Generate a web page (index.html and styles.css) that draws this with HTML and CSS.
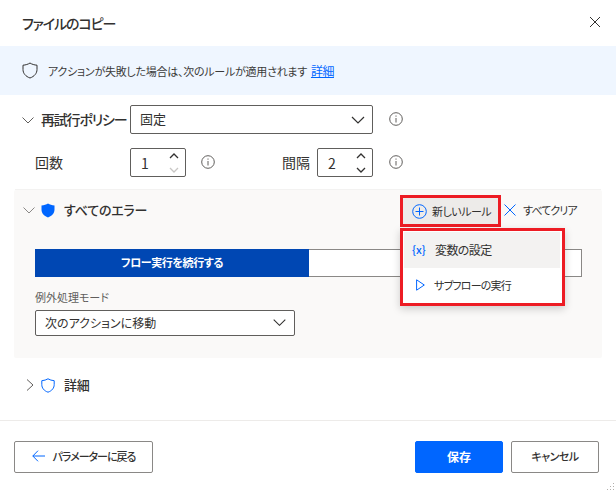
FILE: index.html
```html
<!DOCTYPE html>
<html lang="ja">
<head>
  <meta charset="UTF-8" />
  <title>ファイルのコピー</title>
  <link rel="stylesheet" href="styles.css">
</head>
<body>
  <div class="dialog">
    <header class="title-bar">
      <h1>ファイルのコピー</h1>
      <svg class="close" width="12" height="12" viewBox="0 0 12 12"><path d="M1 1l10 10M11 1L1 11" stroke="#323130" fill="none"/></svg>
    </header>

    <div class="banner">
      <svg width="16" height="17" viewBox="0 0 16 17"><path d="M8 1c2 1.300 4.300 2 7 2.200v4.300c0 3.800-2.600 6.900-7 8.500-4.400-1.600-7-4.700-7-8.500V3.200C3.700 3 6 2.300 8 1z" fill="none" stroke="#323130"/></svg>
      <span>アクションが失敗した場合は、次のルールが適用されます</span>
      <a href="#">詳細</a>
    </div>

    <section class="policy">
      <div class="policy-row">
        <svg class="chev" width="12" height="8" viewBox="0 0 12 8"><path d="M.5 1.500L6 7l5.500-5.500" fill="none" stroke="#605e5c"/></svg>
        <span class="policy-label">再試行ポリシー</span>
        <div class="select select-wide">
          <span>固定</span>
          <svg width="14" height="8" viewBox="0 0 14 8"><path d="M1 1l6 6 6-6" fill="none" stroke="#323130" stroke-width="1.200"/></svg>
        </div>
        <svg class="info" width="14" height="14" viewBox="0 0 14 14"><circle cx="7" cy="7" r="6.300" fill="none" stroke="#605e5c"/><path d="M7 6v4.500M7 3.500v1.200" stroke="#605e5c"/></svg>
      </div>
      <div class="policy-row count-row">
        <span class="count-label">回数</span>
        <div class="spin">
          <span>1</span>
          <svg width="10" height="22" viewBox="0 0 10 22"><path d="M1 6l4-4 4 4" fill="none" stroke="#323130" stroke-width="1.300"/><path d="M1 16l4 4 4-4" fill="none" stroke="#c8c6c4" stroke-width="1.300"/></svg>
        </div>
        <svg class="info info-count" width="14" height="14" viewBox="0 0 14 14"><circle cx="7" cy="7" r="6.300" fill="none" stroke="#605e5c"/><path d="M7 6v4.500M7 3.500v1.200" stroke="#605e5c"/></svg>
        <span class="interval-label">間隔</span>
        <div class="spin">
          <span>2</span>
          <svg width="10" height="22" viewBox="0 0 10 22"><path d="M1 6l4-4 4 4" fill="none" stroke="#323130" stroke-width="1.300"/><path d="M1 16l4 4 4-4" fill="none" stroke="#323130" stroke-width="1.300"/></svg>
        </div>
        <svg class="info" width="14" height="14" viewBox="0 0 14 14"><circle cx="7" cy="7" r="6.300" fill="none" stroke="#605e5c"/><path d="M7 6v4.500M7 3.500v1.200" stroke="#605e5c"/></svg>
      </div>
    </section>

    <section class="errors">
      <div class="errors-head">
        <svg class="chev" width="12" height="8" viewBox="0 0 12 8"><path d="M.5 1.500L6 7l5.500-5.500" fill="none" stroke="#8a8886"/></svg>
        <svg class="shield" width="14" height="15" viewBox="0 0 14 15"><path d="M7 .5c1.800 1.200 3.900 1.800 6.500 2v4c0 3.600-2.300 6.500-6.500 8-4.200-1.500-6.500-4.400-6.500-8v-4C3.100 2.300 5.200 1.700 7 .5z" fill="#0066ff"/></svg>
        <strong class="errors-title">すべてのエラー</strong>
        <div class="new-rule">
          <svg width="15" height="15" viewBox="0 0 15 15"><circle cx="7.500" cy="7.500" r="6.800" fill="none" stroke="#0066ff"/><path d="M7.500 3.500v8M3.500 7.500h8" stroke="#0066ff"/></svg>
          <span>新しいルール</span>
        </div>
        <div class="clear-all">
          <svg width="12" height="12" viewBox="0 0 12 12"><path d="M.5.500l11 11M11.500.500l-11 11" stroke="#0066ff" fill="none"/></svg>
          <span>すべてクリア</span>
        </div>
      </div>

      <div class="toggle">
        <div class="toggle-on">フロー実行を続行する</div>
        <div class="toggle-off"></div>
      </div>

      <div class="field-label">例外処理モード</div>
      <div class="select select-mode">
        <span>次のアクションに移動</span>
        <svg width="13" height="7" viewBox="0 0 13 7"><path d="M.7.700l5.800 5.600L12.300.700" fill="none" stroke="#323130" stroke-width="1.100"/></svg>
      </div>

      <div class="menu">
        <div class="menu-item menu-item-active">
          <span class="var-icon">{x}</span>
          <span>変数の設定</span>
        </div>
        <div class="menu-item menu-item-flow">
          <svg class="play" width="9" height="12" viewBox="0 0 9 12"><path d="M.6.800L8.300 6 .6 11.200z" fill="none" stroke="#0066ff"/></svg>
          <span>サブフローの実行</span>
        </div>
      </div>
    </section>

    <div class="details-row">
      <svg class="chev-right" width="8" height="12" viewBox="0 0 8 12"><path d="M1 .5L7 6l-6 5.500" fill="none" stroke="#605e5c"/></svg>
      <svg class="shield" width="14" height="15" viewBox="0 0 14 15"><path d="M7 .8c1.800 1.100 3.800 1.700 6.200 1.900v3.900c0 3.400-2.200 6.200-6.200 7.600C3 12.800.8 10 .8 6.600V2.700C3.200 2.500 5.200 1.900 7 .8z" fill="none" stroke="#0066ff"/></svg>
      <strong class="errors-title">詳細</strong>
    </div>

    <footer class="footer">
      <button class="btn btn-back">
        <svg width="13" height="12" viewBox="0 0 13 12"><path d="M6 .7L.8 6 6 11.300M.8 6H13" fill="none" stroke="#0066ff"/></svg>
        <span>パラメーターに戻る</span>
      </button>
      <button class="btn btn-save">保存</button>
      <button class="btn btn-cancel">キャンセル</button>
    </footer>

    <svg class="grip" width="10" height="8" viewBox="0 0 10 8"><path d="M8 0h1v1H8zM5 3h1v1H5zM8 3h1v1H8zM2 6h1v1H2zM5 6h1v1H5zM8 6h1v1H8z" fill="#b3b0ad"/></svg>
  </div>
</body>
</html>
```

FILE: styles.css
```css
* { box-sizing: border-box; }
html, body { height: 100%; }
body {
  margin: 0;
  background: #fff;
  color: #323130;
  font-family: "Noto Sans CJK JP", "Noto Sans", sans-serif;
  font-feature-settings: "palt";
  font-size: 12px;
  white-space: nowrap;
  overflow: hidden;
}
svg { display: block; flex: none; }
.dialog { position: relative; height: 100%; }

.title-bar {
  height: 46px;
  padding: 0 15px 0 22px;
  display: flex;
  justify-content: space-between;
  align-items: center;
}
.title-bar h1 { margin: 0 0 1px; font-size: 14px; font-weight: 500; line-height: 20px; letter-spacing: -1.1px; }
.close { margin-bottom: 2px; }

.banner {
  height: 49px;
  padding-left: 22px;
  display: flex;
  align-items: center;
  background: #eff6ff;
  font-size: 11px;
}
.banner span { margin-left: 10px; color: #3b3a39; line-height: 16px; letter-spacing: -.25px; }
.banner a { margin-left: 4px; color: #0066ff; font-size: 12px; letter-spacing: -.5px; }

.policy { margin: 0 15px; padding: 10px 0 12px; border-bottom: 1px solid #f3f2f1; height: 95px; }
.policy-row { display: flex; align-items: center; height: 29px; padding-left: 7px; }
.count-row { margin-top: 14px; padding-left: 20px; }
.policy-label { margin: 0 0 2px 7px; width: 89px; font-size: 14px; font-weight: 500; letter-spacing: -1.2px; }
.count-label { width: 95px; font-size: 14px; margin-bottom: 2px; }
.interval-label { margin: 0 0 2px 67px; width: 35px; font-size: 14px; }

.select {
  display: flex;
  justify-content: space-between;
  align-items: center;
  background: #fff;
  border: 1px solid #605e5c;
  border-radius: 2px;
}
.select-wide { width: 243px; height: 29px; padding: 0 7px 2px 9px; font-size: 13px; }
.select-wide svg { margin-top: 2px; }
.info { margin: 0 0 2px 16px; }
.info-count { margin-left: 15px; }

.spin {
  width: 56px;
  height: 29px;
  padding: 0 6px 0 10px;
  display: flex;
  justify-content: space-between;
  align-items: center;
  border: 1px solid #605e5c;
  border-radius: 2px;
  font-size: 14px;
}

.errors {
  position: relative;
  margin: 0 14px;
  height: 168px;
  padding: 0 20px 0 21px;
  background: #faf9f8;
  border-radius: 2px;
}
.errors-head { height: 59px; display: flex; align-items: center; padding-bottom: 19px; margin-left: -12px; }
.errors-head .shield { margin-left: 6px; }
.errors-title { margin: 0 0 2px 9px; font-size: 13px; font-weight: 500; letter-spacing: -.2px; }

.new-rule {
  margin-left: auto;
  width: 101px;
  height: 32px;
  margin-top: 2px;
  padding-left: 9px;
  display: flex;
  align-items: center;
  gap: 5px;
  background: #edebe9;
  border: 3px solid #ed1c24;
  font-size: 11px;
  letter-spacing: -.5px;
}
.clear-all {
  width: 78px;
  margin-left: 3px;
  display: flex;
  align-items: center;
  gap: 7px;
  font-size: 11px;
  letter-spacing: -.9px;
}

.toggle { display: flex; height: 28px; }
.toggle-on {
  width: 274px;
  line-height: 27px;
  text-align: center;
  background: #0047b3;
  color: #fff;
  font-weight: 700;
  font-size: 11px;
  letter-spacing: -.4px;
}
.toggle-off { flex: 1; background: #fff; border: 1px solid #8a8886; border-left: 0; }

.field-label { margin-top: 11px; line-height: 18px; color: #605e5c; font-size: 11px; }
.select-mode { width: 260px; height: 26px; margin-top: 4px; padding: 0 8px 1px 9px; }

.menu {
  position: absolute;
  left: 386px;
  top: 38px;
  width: 165px;
  height: 78px;
  padding: 1px 2px 0 1px;
  background: #fff;
  border: 3px solid #ed1c24;
  box-shadow: 0 3px 8px rgba(0, 0, 0, .18);
}
.menu-item { height: 36px; padding: 0 0 2px 8px; display: flex; align-items: center; gap: 8px; }
.menu-item-active { background: #f3f2f1; letter-spacing: -.6px; }
.menu-item-flow { gap: 9px; font-size: 11px; letter-spacing: -.8px; }
.var-icon { width: 15px; color: #0066ff; font-size: 11px; font-weight: 500; letter-spacing: 0; }
.play { margin-left: 4px; }

.details-row { height: 63px; padding: 0 0 8px 26px; display: flex; align-items: center; border-bottom: 1px solid #edebe9; }
.details-row .shield { margin-left: 7px; }

.footer { display: flex; padding: 20px 17px 0 14px; }
.btn {
  height: 32px;
  padding: 0 0 2px;
  border-radius: 2px;
  font-family: inherit;
  font-size: 11px;
  font-feature-settings: inherit;
  font-weight: 500;
  color: #323130;
  background: #fff;
  border: 1px solid #8a8886;
  display: flex;
  align-items: center;
  justify-content: center;
}
.btn-back { width: 139px; gap: 8px; letter-spacing: -1px; }
.btn-save { width: 88px; margin-left: auto; background: #0066ff; border-color: #0066ff; color: #fff; font-weight: 700; font-size: 12px; }
.btn-cancel { width: 88px; margin-left: 8px; letter-spacing: -.5px; }

.grip { position: absolute; right: 1px; bottom: 0; }
```
